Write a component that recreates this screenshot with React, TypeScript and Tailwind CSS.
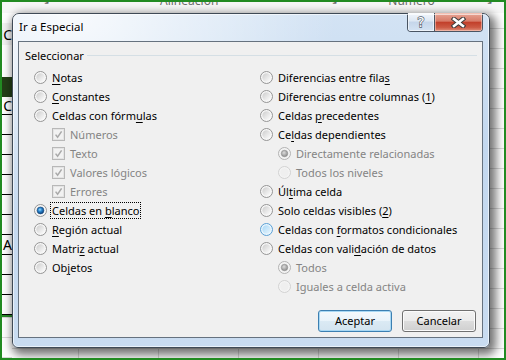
import React from "react";

type RState = "normal" | "checked" | "hover" | "disabled" | "disabledChecked";

function Radio({ state }: { state: RState }) {
  const disabled = state === "disabled" || state === "disabledChecked";
  let outerStroke = "#949494";
  let outerFill = "#f7f7f7";
  let innerFill = "url(#rnGrad)";
  if (state === "hover") {
    outerStroke = "#5a9fd4";
    outerFill = "#eaf6fd";
    innerFill = "url(#rhGrad)";
  } else if (disabled) {
    outerStroke = state === "disabledChecked" ? "#b2b2b2" : "#d2d2d2";
    outerFill = "#f4f4f4";
    innerFill = "#efefef";
  }
  return (
    <svg width="13" height="13" viewBox="0 0 13 13" className="shrink-0">
      <defs>
        <linearGradient id="rnGrad" x1="0" y1="0" x2="1" y2="1">
          <stop offset="0" stopColor="#cdcdcd" />
          <stop offset="1" stopColor="#fdfdfd" />
        </linearGradient>
        <linearGradient id="rhGrad" x1="0" y1="0" x2="1" y2="1">
          <stop offset="0" stopColor="#a9d8f6" />
          <stop offset="1" stopColor="#e8f5fd" />
        </linearGradient>
        <radialGradient id="rcGrad" cx="0.42" cy="0.38" r="0.62">
          <stop offset="0" stopColor="#9fdcfb" />
          <stop offset="0.45" stopColor="#2a86cf" />
          <stop offset="1" stopColor="#0b3d77" />
        </radialGradient>
        <radialGradient id="rdGrad" cx="0.42" cy="0.38" r="0.62">
          <stop offset="0" stopColor="#dcdcdc" />
          <stop offset="1" stopColor="#8f8f8f" />
        </radialGradient>
      </defs>
      <circle cx="6.5" cy="6.5" r="6" fill={outerFill} stroke={outerStroke} strokeWidth="1" />
      <circle cx="6.5" cy="6.5" r="4.2" fill={innerFill} />
      {state === "checked" && (
        <circle cx="6.5" cy="6.5" r="3.4" fill="url(#rcGrad)" stroke="#174a80" strokeWidth="0.6" />
      )}
      {state === "disabledChecked" && (
        <circle cx="6.5" cy="6.5" r="3.2" fill="url(#rdGrad)" stroke="#8c8c8c" strokeWidth="0.6" />
      )}
    </svg>
  );
}

function Check() {
  return (
    <svg width="13" height="13" viewBox="0 0 13 13" className="shrink-0">
      <rect x="0.5" y="0.5" width="12" height="12" fill="#f4f4f4" stroke="#b8b8b8" />
      <rect x="1.5" y="1.5" width="10" height="10" fill="#f2f2f2" stroke="#e4e4e4" />
      <path d="M3.6 6.6 L5.6 9.2 L9.6 3.4" stroke="#a9a9a9" strokeWidth="1.5" fill="none" />
    </svg>
  );
}

function Lbl({ t }: { t: string }) {
  const i = t.indexOf("&");
  if (i < 0) return <>{t}</>;
  return (
    <>
      {t.slice(0, i)}
      <span className="underline underline-offset-[2px] decoration-[1px]">{t[i + 1]}</span>
      {t.slice(i + 2)}
    </>
  );
}

type Item = {
  t: string;
  kind: "radio" | "check";
  state?: RState;
  indent?: boolean;
  disabled?: boolean;
  focus?: boolean;
};

const left: Item[] = [
  { t: "&Notas", kind: "radio", state: "normal" },
  { t: "&Constantes", kind: "radio", state: "normal" },
  { t: "Celdas con fórm&ulas", kind: "radio", state: "normal" },
  { t: "Números", kind: "check", indent: true, disabled: true },
  { t: "Texto", kind: "check", indent: true, disabled: true },
  { t: "Valores lógicos", kind: "check", indent: true, disabled: true },
  { t: "Errores", kind: "check", indent: true, disabled: true },
  { t: "Celdas en &blanco", kind: "radio", state: "checked", focus: true },
  { t: "&Región actual", kind: "radio", state: "normal" },
  { t: "Matri&z actual", kind: "radio", state: "normal" },
  { t: "Ob&jetos", kind: "radio", state: "normal" },
];

const right: Item[] = [
  { t: "Diferencias entre fila&s", kind: "radio", state: "normal" },
  { t: "Diferencias entre columnas (&1)", kind: "radio", state: "normal" },
  { t: "Celdas &precedentes", kind: "radio", state: "normal" },
  { t: "Ce&ldas dependientes", kind: "radio", state: "normal" },
  { t: "Directamente relacionadas", kind: "radio", state: "disabledChecked", indent: true, disabled: true },
  { t: "Todos los niveles", kind: "radio", state: "disabled", indent: true, disabled: true },
  { t: "Úl&tima celda", kind: "radio", state: "normal" },
  { t: "Solo celdas visibles (&2)", kind: "radio", state: "normal" },
  { t: "Celdas con &formatos condicionales", kind: "radio", state: "hover" },
  { t: "Celdas con vali&dación de datos", kind: "radio", state: "normal" },
  { t: "Todos", kind: "radio", state: "disabledChecked", indent: true, disabled: true },
  { t: "Iguales a celda activa", kind: "radio", state: "disabled", indent: true, disabled: true },
];

function Row({ it }: { it: Item }) {
  return (
    <div className={`flex h-[19px] items-center ${it.indent ? "pl-[18px]" : ""}`}>
      {it.kind === "radio" ? <Radio state={it.state || "normal"} /> : <Check />}
      <span
        className={`ml-[3px] whitespace-nowrap leading-[15px] ${
          it.disabled ? "text-[#848484]" : "text-black"
        } ${it.focus ? "border border-dotted border-black px-[1px]" : "border border-transparent px-[1px]"}`}
      >
        <Lbl t={it.t} />
      </span>
    </div>
  );
}

function CloseX() {
  return (
    <svg width="15" height="11" viewBox="0 0 15 11">
      <path d="M3 2 L12 9 M12 2 L3 9" stroke="#3b3b3b" strokeWidth="4.6" strokeLinecap="square" fill="none" />
      <path d="M3 2 L12 9 M12 2 L3 9" stroke="#ffffff" strokeWidth="2.6" strokeLinecap="square" fill="none" />
    </svg>
  );
}

function Help() {
  return (
    <svg width="12" height="14" viewBox="0 0 12 14">
      <text
        x="6"
        y="12"
        textAnchor="middle"
        fontSize="14"
        fontFamily="'DejaVu Sans', sans-serif"
        fill="#ffffff"
        stroke="#55606c"
        strokeWidth="1.3"
        paintOrder="stroke"
      >
        ?
      </text>
    </svg>
  );
}

export default function App() {
  const leftCellRows = [0, 1, 2, 3, 4, 5, 6, 7, 8, 9];
  return (
    <div className="relative h-[360px] w-[506px] overflow-hidden bg-white font-['Noto_Sans',sans-serif] text-[11px]">
      {/* Excel background */}
      <div className="flex h-full flex-col">
        <div className="flex h-[13px] shrink-0 items-start overflow-hidden bg-[#f7f7f7] text-[12px] text-[#6a6a6a]">
          <span className="ml-[40px] mt-[-9px]">↘</span>
          <span className="ml-[110px] mt-[-8px]">Alineación</span>
          <span className="ml-[110px] mt-[-9px]">↘</span>
          <span className="ml-[50px] mt-[-8px]">Número</span>
          <span className="ml-[48px] mt-[-9px]">↘</span>
        </div>
        <div className="flex flex-1">
          <div className="flex w-[12px] shrink-0 flex-col">
            <div className="h-[10px] bg-white" />
            <div className="flex h-[22px] items-center justify-end overflow-hidden bg-[#f3f3f3] text-[14px] text-black">
              <span className="whitespace-nowrap">NC</span>
            </div>
            <div className="h-[32px] bg-white" />
            <div className="h-[20px] bg-[#233f17]" />
            <div className="flex h-[18px] items-center justify-end overflow-hidden border-b border-black text-[14px]">
              <span className="whitespace-nowrap">C</span>
            </div>
            {leftCellRows.map((i) => (
              <div
                key={i}
                className="flex h-[20px] items-center overflow-hidden border-b border-black pl-[3px] text-[14px]"
              >
                {i === 6 ? "A" : ""}
              </div>
            ))}
            <div className="h-[2px] bg-[#2b8a2b]" />
            <div className="flex-1 bg-[linear-gradient(to_bottom,#dadada_1px,transparent_1px)] bg-[size:20px_20px]" />
          </div>
          <div className="flex-1 bg-[linear-gradient(to_right,#dadada_1px,transparent_1px),linear-gradient(to_bottom,#dadada_1px,transparent_1px)] bg-[size:80px_20px] bg-[position:66px_15px]" />
        </div>
      </div>

      {/* Dialog window */}
      <div className="absolute left-[12px] top-[13px] flex h-[335px] w-[478px] flex-col rounded-t-[7px] rounded-b-[6px] border border-[#3f4a56] bg-[radial-gradient(ellipse_at_12%_0%,rgba(255,255,255,0.85),rgba(255,255,255,0)_45%),linear-gradient(to_bottom,#d3e3f4,#c3d8ef_40%,#c9dcf1)] shadow-[3px_4px_10px_3px_rgba(0,0,0,0.55)]">
        <div className="pointer-events-none absolute inset-0 rounded-t-[6px] rounded-b-[5px] border border-white/60" />
        <div className="flex h-[27px] shrink-0 items-start">
          <span className="ml-[6px] mt-[5px] text-[11.5px] leading-[16px] text-black [text-shadow:0_0_6px_#fff,0_0_3px_#fff]">
            Ir a Especial
          </span>
          <div className="ml-auto mr-[6px] mt-[-1px] flex h-[19px] overflow-hidden rounded-b-[4px] border border-t-0 border-[#4a5563]">
            <div className="flex w-[27px] items-center justify-center border-r border-[#4a5563] bg-[linear-gradient(to_bottom,#f2f6fb,#dce7f3_45%,#c5d6ea_50%,#d4e3f3)] shadow-[inset_0_0_0_1px_rgba(255,255,255,0.6)]">
              <Help />
            </div>
            <div className="flex w-[47px] items-center justify-center bg-[linear-gradient(to_bottom,#e8a898,#d77b68_45%,#c2402b_52%,#cc5a44_80%,#e0917c)] shadow-[inset_0_0_0_1px_rgba(255,220,210,0.5)]">
              <CloseX />
            </div>
          </div>
        </div>

        <div className="ml-[5px] mr-[6px] flex h-[297px] flex-col border border-[#66727f] bg-[#f0f0f0]">
          <div className="mt-[6px] flex h-[15px] items-center">
            <span className="ml-[6px] leading-[15px] text-black">Seleccionar</span>
            <div className="ml-[3px] mr-[5px] h-px flex-1 bg-[#d5dfe5]" />
          </div>
          <div className="mt-[5px] grid grid-cols-[226px_1fr] pl-[15px]">
            <div className="flex flex-col">
              {left.map((it, i) => (
                <Row key={i} it={it} />
              ))}
            </div>
            <div className="flex flex-col">
              {right.map((it, i) => (
                <Row key={i} it={it} />
              ))}
            </div>
          </div>
          <div className="mb-[5px] mr-[6px] mt-auto flex justify-end gap-[10px]">
            <button className="h-[22px] w-[74px] rounded-[3px] border border-[#3c7fb1] bg-[linear-gradient(to_bottom,#f4f9fc,#e9f3fa_50%,#dbeaf4_50%,#d3e4f0)] text-[11px] text-black shadow-[inset_0_0_0_1px_#a8d8f4]">
              Aceptar
            </button>
            <button className="h-[22px] w-[74px] rounded-[3px] border border-[#707070] bg-[linear-gradient(to_bottom,#f2f2f2,#ebebeb_50%,#dddddd_50%,#cfcfcf)] text-[11px] text-black shadow-[inset_0_0_0_1px_#fbfbfb]">
              Cancelar
            </button>
          </div>
        </div>
      </div>

      {/* outer green border */}
      <div className="pointer-events-none absolute inset-0 border-2 border-[#228b22]" />
    </div>
  );
}
